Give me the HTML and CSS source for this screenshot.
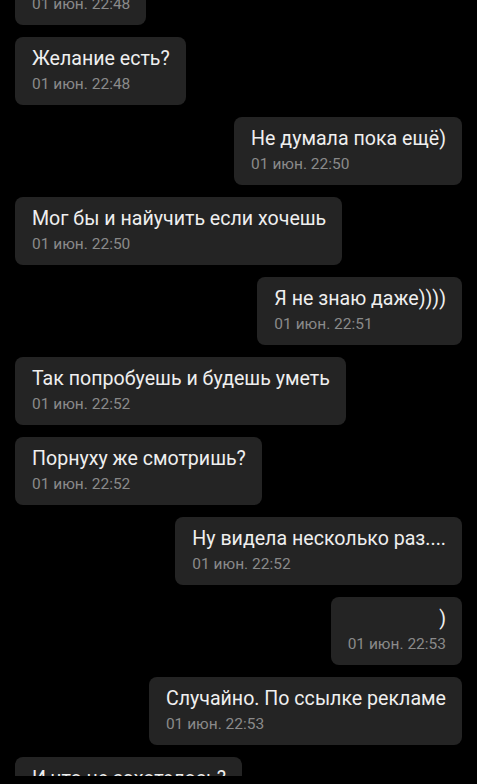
FILE: index.html
```html
<html>

<head>
    <title>Чат</title>
    <meta charset="utf-8">
    <link rel="stylesheet" href="styles.css">
</head>

<body>
    <div class="chat">
        <div class="messageList">
            <div class="message incoming">
                <div class="messageText">Да</div>
                <div class="messageTime">01 июн. 22:48</div>
            </div>
            <div class="message incoming">
                <div class="messageText">Желание есть?</div>
                <div class="messageTime">01 июн. 22:48</div>
            </div>
            <div class="message outgoing">
                <div class="messageText">Не думала пока ещё)</div>
                <div class="messageTime">01 июн. 22:50</div>
            </div>
            <div class="message incoming">
                <div class="messageText">Мог бы и найучить если хочешь</div>
                <div class="messageTime">01 июн. 22:50</div>
            </div>
            <div class="message outgoing">
                <div class="messageText">Я не знаю даже))))</div>
                <div class="messageTime">01 июн. 22:51</div>
            </div>
            <div class="message incoming">
                <div class="messageText">Так попробуешь и будешь уметь</div>
                <div class="messageTime">01 июн. 22:52</div>
            </div>
            <div class="message incoming">
                <div class="messageText">Порнуху же смотришь?</div>
                <div class="messageTime">01 июн. 22:52</div>
            </div>
            <div class="message outgoing">
                <div class="messageText">Ну видела несколько раз....</div>
                <div class="messageTime">01 июн. 22:52</div>
            </div>
            <div class="message outgoing">
                <div class="messageText">)</div>
                <div class="messageTime">01 июн. 22:53</div>
            </div>
            <div class="message outgoing">
                <div class="messageText">Случайно. По ссылке рекламе</div>
                <div class="messageTime">01 июн. 22:53</div>
            </div>
            <div class="message incoming">
                <div class="messageText">И что не захотелось?</div>
                <div class="messageTime">01 июн. 22:54</div>
            </div>
        </div>
    </div>
</body>

</html>
```

FILE: styles.css
```css
body {
    margin: 0px;
    background-color: #000000;
    font-family: Roboto, "Noto Sans", sans-serif;
}

.chat {
    height: 776px;
    overflow: hidden;
}

.messageList {
    display: flex;
    flex-direction: column;
    gap: 12px;
    padding: 0px 15px;
    margin-top: -43px;
}

.message {
    display: flex;
    flex-direction: column;
    gap: 6px;
    padding: 11px 16px 12px 17px;
    border-radius: 8px;
    background-color: #242424;
}

.incoming {
    align-self: flex-start;
}

.outgoing {
    align-self: flex-end;
}

.messageText {
    font-size: 19.6px;
    line-height: 22px;
    color: #efefef;
    white-space: nowrap;
}

.outgoing .messageText {
    text-align: right;
}

.messageTime {
    font-size: 15.5px;
    line-height: 17px;
    color: #8a8a8a;
    white-space: nowrap;
}
```
